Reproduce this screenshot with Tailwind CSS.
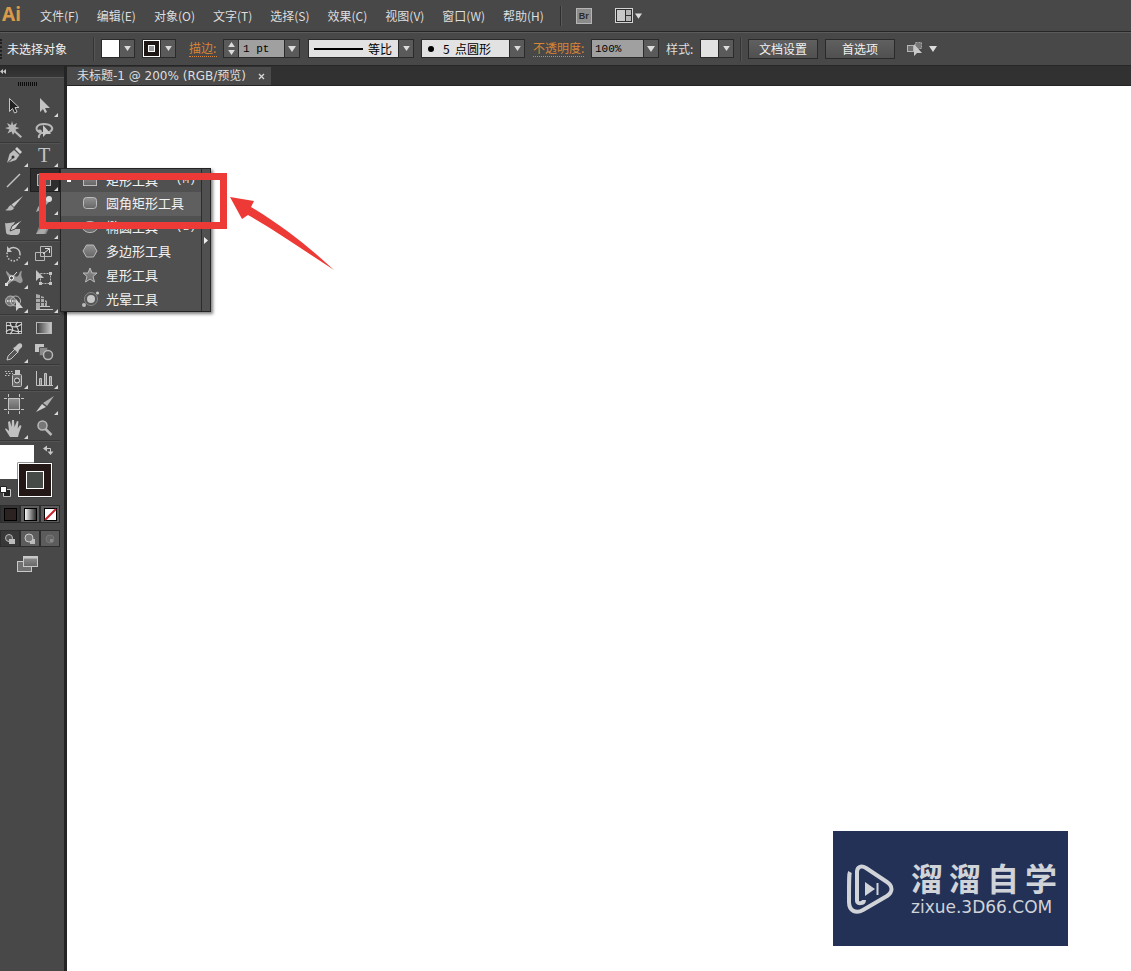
<!DOCTYPE html>
<html lang="zh-CN">
<head>
  <meta charset="UTF-8" />
  <meta name="viewport" content="width=device-width, initial-scale=1" />
  <title>未标题-1 @ 200% (RGB/预览)</title>
  <script src="https://cdn.jsdelivr.net/npm/@tailwindcss/browser@4"></script>
</head>
<body class="flex min-h-screen flex-col bg-white font-['Noto_Sans_CJK_SC',sans-serif] text-[12px] leading-4 text-[#dedede]">

  <!-- shared symbols -->
  <svg class="absolute h-0 w-0">
    <defs>
      <symbol id="down" viewBox="0 0 8 6"><path d="M0 0h8L4 6z" fill="#dcdcdc" /></symbol>
      <symbol id="more" viewBox="0 0 30 24"><path d="M28 19v4h-4z" fill="#d8d8d8" /></symbol>
      <linearGradient id="metal" x1="0" y1="0" x2="0" y2="1"><stop offset="0" stop-color="#929292" /><stop offset="1" stop-color="#666" /></linearGradient>
      <linearGradient id="fade" x1="0" y1="0" x2="1" y2="0"><stop offset="0" stop-color="#3a3a3a" /><stop offset="1" stop-color="#ccc" /></linearGradient>
      <linearGradient id="fadeBack" x1="0" y1="0" x2="1" y2="0"><stop offset="0" stop-color="#fff" /><stop offset="1" stop-color="#222" /></linearGradient>
    </defs>
  </svg>

  <!-- menu bar -->
  <header class="flex h-[31px] items-center bg-[#484848]">
    <span class="w-10 pb-1 pl-[2px] font-['Noto_Sans',sans-serif] text-[19px] leading-6 font-bold text-[#d99a4a]">Ai</span>
    <nav class="flex gap-[18px]">
      <a href="#">文件(F)</a>
      <a href="#">编辑(E)</a>
      <a href="#">对象(O)</a>
      <a href="#">文字(T)</a>
      <a href="#">选择(S)</a>
      <a href="#">效果(C)</a>
      <a href="#">视图(V)</a>
      <a href="#">窗口(W)</a>
      <a href="#">帮助(H)</a>
    </nav>
    <div class="ml-4 h-5 w-[2px] border-l border-[#2e2e2e] bg-[#5a5a5a]"></div>
    <button class="ml-[14px] h-4 w-4 border border-[#b5b5b5] bg-[#8b8b8b] font-['Liberation_Sans',sans-serif] text-[9px] leading-3 font-bold text-[#2b2b2b]">Br</button>
    <button class="ml-[23px] flex items-center gap-[2px]" aria-label="排列文档">
      <svg class="h-[15px] w-[18px]" viewBox="0 0 18 15"><rect x=".5" y=".5" width="17" height="14" fill="#2e2e2e" stroke="#d4d4d4" /><path d="M2 2h8v11H2z" fill="#c8c8c8" /><path d="M11 2h5v5h-5zM11 8h5v5h-5z" fill="#b5b5b5" /></svg>
      <svg class="h-[6px] w-[7px]"><use href="#down" /></svg>
    </button>
  </header>

  <!-- control bar -->
  <div class="flex h-[35px] items-center border-t border-b border-[#262626] bg-[#484848] shadow-[inset_0_1px_0_#5b5b5b]">
    <div class="h-5 w-[2px] border-l-2 border-dotted border-[#1f1f1f]"></div>
    <span class="ml-[5px] w-[86px] text-[#f0f0f0]">未选择对象</span>
    <div class="h-6 w-[2px] border-l border-[#353535] bg-[#555]"></div>

    <button class="ml-[6px] flex h-[19px] w-[34px] items-center border border-[#2a2a2a] bg-[#5a5a5a]" aria-label="填色">
      <span class="h-full w-[18px] border-r border-[#2a2a2a] bg-white"></span>
      <svg class="ml-1 h-[5px] w-[7px]"><use href="#down" /></svg>
    </button>
    <button class="ml-[7px] flex h-[19px] w-[34px] items-center border border-[#2a2a2a] bg-[#5a5a5a]" aria-label="描边颜色">
      <svg class="h-[17px] w-[18px]" viewBox="0 0 18 17"><rect x=".5" y=".5" width="16" height="16" fill="#1e1715" stroke="#fff" /><rect x="5.500" y="5.500" width="6" height="6" fill="#999" stroke="#fff" /><path d="M17.500 0v17" stroke="#2a2a2a" /></svg>
      <svg class="ml-1 h-[5px] w-[7px]"><use href="#down" /></svg>
    </button>

    <label for="stroke" class="ml-[13px] w-7 border-b border-dotted border-[#d98436] whitespace-nowrap text-[#d98436]">描边:</label>
    <div class="ml-[6px] flex h-[19px] w-[77px] border border-[#2a2a2a] bg-[#5a5a5a]">
      <div class="flex w-[15px] flex-col items-center justify-evenly border-r border-[#2a2a2a]">
        <svg class="h-[5px] w-[7px] rotate-180"><use href="#down" /></svg>
        <svg class="h-[5px] w-[7px]"><use href="#down" /></svg>
      </div>
      <input id="stroke" value="1 pt" class="w-[45px] bg-[#a0a0a0] pl-1 font-['Liberation_Mono',monospace] text-[11px] text-black" />
      <button class="flex flex-1 items-center justify-center border-l border-[#2a2a2a]" aria-label="粗细"><svg class="h-[6px] w-2"><use href="#down" /></svg></button>
    </div>

    <div class="ml-2 flex h-[19px] w-[106px] border border-[#2a2a2a] bg-[#5a5a5a]">
      <div class="flex flex-1 items-center bg-[#e2e2e2]">
        <div class="mx-[5px] h-[2px] w-[49px] bg-black"></div>
        <select class="w-7 appearance-none text-[12px] leading-4 text-black" aria-label="变量宽度"><option>等比</option></select>
      </div>
      <button class="flex w-[15px] items-center justify-center border-l border-[#2a2a2a]" aria-label="展开宽度"><svg class="h-[5px] w-[7px]"><use href="#down" /></svg></button>
    </div>

    <div class="ml-[7px] flex h-[19px] w-[104px] border border-[#2a2a2a] bg-[#5a5a5a]">
      <div class="flex flex-1 items-center bg-[#e2e2e2]">
        <div class="mr-[9px] ml-[6px] h-[6px] w-[6px] rounded-full bg-black"></div>
        <select class="w-16 appearance-none text-[12px] leading-4 text-black" aria-label="画笔定义"><option>5 &nbsp;点圆形</option></select>
      </div>
      <button class="flex w-[15px] items-center justify-center border-l border-[#2a2a2a]" aria-label="展开画笔"><svg class="h-[5px] w-[7px]"><use href="#down" /></svg></button>
    </div>

    <label for="opacity" class="ml-2 w-[51px] border-b border-dotted border-[#d98436] whitespace-nowrap text-[#d98436]">不透明度:</label>
    <div class="ml-[7px] flex h-[19px] w-[68px] border border-[#2a2a2a] bg-[#5a5a5a]">
      <input id="opacity" value="100%" class="w-[51px] bg-[#a0a0a0] pl-[3px] font-['Liberation_Mono',monospace] text-[11px] text-black" />
      <button class="flex flex-1 items-center justify-center border-l border-[#2a2a2a]" aria-label="展开不透明度"><svg class="h-[6px] w-2"><use href="#down" /></svg></button>
    </div>

    <span class="ml-[7px] w-[34px]">样式:</span>
    <button class="flex h-[19px] w-[34px] items-center border border-[#2a2a2a] bg-[#5a5a5a]" aria-label="图形样式">
      <span class="h-full w-[18px] border-r border-[#2a2a2a] bg-[#e2e2e2]"></span>
      <svg class="ml-1 h-[5px] w-[7px]"><use href="#down" /></svg>
    </button>
    <div class="ml-[6px] h-6 w-[2px] border-l border-[#353535] bg-[#555]"></div>
    <button class="ml-[6px] h-5 w-[70px] border border-[#2a2a2a] bg-linear-to-b from-[#606060] to-[#505050] text-[#f0f0f0]">文档设置</button>
    <button class="ml-[7px] h-5 w-[70px] border border-[#2a2a2a] bg-linear-to-b from-[#606060] to-[#505050] text-[#f0f0f0]">首选项</button>
    <button class="ml-[11px] flex items-center gap-[6px]" aria-label="选择类似对象">
      <svg class="h-[15px] w-[17px]" viewBox="0 0 17 15"><rect x="1.500" y="4.500" width="6" height="6" fill="#6e6e6e" stroke="#b5b5b5" /><rect x="9.500" y="1.500" width="6" height="6" fill="#777" stroke="#a5a5a5" stroke-dasharray="2 1" /><path d="M8 3v12l3-3h5z" fill="#c9c9c9" /></svg>
      <svg class="h-[6px] w-2"><use href="#down" /></svg>
    </button>
  </div>

  <div class="flex flex-1">
    <!-- tool panel -->
    <aside class="relative w-[67px] shrink-0 border-r-[3px] border-[#242424] bg-[#484848]">
      <div class="flex h-[11px] items-center bg-linear-to-b from-[#2c2c2c] to-[#363636]">
        <svg class="h-[5px] w-[6px]" viewBox="0 0 6 5"><path d="M3 0v5L0 2.500zM6 0v5L3 2.500z" fill="#c8c8c8" /></svg>
      </div>
      <div class="flex h-[17px] items-start border-t border-[#5a5a5a] pt-1 pl-[18px]">
        <svg class="h-1 w-5" viewBox="0 0 20 4"><path d="M0 2h20" stroke="#0c0c0c" stroke-width="4" stroke-dasharray="1 1" /></svg>
      </div>

      <div class="grid w-[60px] grid-cols-2">
        <button aria-label="选择工具"><svg class="h-6 w-[30px]" viewBox="0 0 30 24"><path d="M9.500 4.500v13l3-3 2 4.500 2.500-1-2-4.500h4z" fill="#222" stroke="#c4c4c4" /></svg></button>
        <button aria-label="直接选择工具"><svg class="h-6 w-[30px]" viewBox="0 0 30 24"><path d="M10 4v14l3-3 2 4 2-1-2-4h5z" fill="#c4c4c4" /><use href="#more" /></svg></button>
        <button aria-label="魔棒工具"><svg class="h-6 w-[30px]" viewBox="0 0 30 24"><path d="M12 3l1.200 4L17 5l-1.500 4 4 1-4 1.500.5 1.500 6 5.500-1.500 1.500-6-5.500-1.500 2.500-1.500-3.500-4 2 2-4-4.500-1.500L9 9 7 5l4 2z" fill="#b8b8b8" /></svg></button>
        <button aria-label="套索工具"><svg class="h-6 w-[30px]" viewBox="0 0 30 24"><path d="M9 14c-5-3-2-8 5-8s10 4 7 7c-2 2-8 3-12 1M9 14c-2-1 2-3 2 0s-3 2-2 6" fill="none" stroke="#b8b8b8" stroke-width="2" /><path d="M13 7v12l3-3h5z" fill="#c8c8c8" /></svg></button>
      </div>
      <hr class="my-0 mr-1 border-t border-[#383838] shadow-[0_1px_0_#545454]" />
      <div class="mt-[1px] grid w-[60px] grid-cols-2">
        <button aria-label="钢笔工具"><svg class="h-6 w-[30px]" viewBox="0 0 30 24"><path d="M17 3l5 5-2 2-5-5z" fill="#d0d0d0" /><path d="M14 6l5.500 5-3.500 5-9 3 2.500-9z" fill="#bdbdbd" /><path d="M7.500 19l5-5" stroke="#333" /><circle cx="13" cy="13" r="1.500" fill="#333" /><use href="#more" /></svg></button>
        <button aria-label="文字工具"><svg class="h-6 w-[30px]" viewBox="0 0 30 24"><text x="14" y="18" text-anchor="middle" fill="#c4c4c4" class="font-['Liberation_Serif',serif] text-[20px]">T</text><use href="#more" /></svg></button>
        <button aria-label="直线段工具"><svg class="h-6 w-[30px]" viewBox="0 0 30 24"><path d="M7 19L20 6" stroke="#c4c4c4" stroke-width="1.500" /><use href="#more" /></svg></button>
        <button class="border border-[#1f1f1f] bg-[#2e2e2e]" aria-label="矩形工具"><svg class="-m-px h-6 w-[30px]" viewBox="0 0 30 24"><rect x="7.500" y="6.500" width="13" height="11" fill="#555" stroke="#b5b5b5" /><use href="#more" /></svg></button>
        <button aria-label="画笔工具"><svg class="h-6 w-[30px]" viewBox="0 0 30 24"><path d="M23 4L14 15l-2.500-2.500z" fill="#c8c8c8" /><path d="M11 13l3 3c-1 3-6 3-9 2 3 0 3-4 6-5z" fill="#b8b8b8" /></svg></button>
        <button aria-label="铅笔工具"><svg class="h-6 w-[30px]" viewBox="0 0 30 24"><path d="M18 5l3 3-10 10-5 2 2-5z" fill="#aaa" /><circle cx="19" cy="7" r="3" fill="#ddd" /><use href="#more" /></svg></button>
        <button aria-label="斑点画笔工具"><svg class="h-6 w-[30px]" viewBox="0 0 30 24"><path d="M5 7c3 1 7-1 10-1l-4 7h9v3c-1 4-4 3-7 3s-7 0-7-3z" fill="#b8b8b8" /><path d="M23 3l-8 10-5 2 2-5z" fill="#d0d0d0" stroke="#444" /></svg></button>
        <button aria-label="橡皮擦工具"><svg class="h-6 w-[30px]" viewBox="0 0 30 24"><path d="M11 6h11l-6 12H6z" fill="#8d8d8d" /><path d="M6 18l5-6h6l-3 6z" fill="#aaa" /><use href="#more" /></svg></button>
      </div>
      <hr class="my-0 mr-1 border-t border-[#383838] shadow-[0_1px_0_#545454]" />
      <div class="mt-[1px] grid w-[60px] grid-cols-2">
        <button aria-label="旋转工具"><svg class="h-6 w-[30px]" viewBox="0 0 30 24"><path d="M9 7.500a6.500 6.500 0 0 1 11 4.500" fill="none" stroke="#c4c4c4" stroke-width="1.500" /><path d="M20 12a6.500 6.500 0 1 1-12-3" fill="none" stroke="#c4c4c4" stroke-width="1.500" stroke-dasharray="1.500 1.500" /><path d="M7 4v6h5z" fill="#c4c4c4" /><use href="#more" /></svg></button>
        <button aria-label="比例缩放工具"><svg class="h-6 w-[30px]" viewBox="0 0 30 24"><path d="M10.500 4.500h11v10h-11zM5.500 10.500h9v8h-9z" fill="none" stroke="#b8b8b8" /><path d="M13 12l6-5M15 6.500h4.500V11" fill="none" stroke="#e0e0e0" /><use href="#more" /></svg></button>
        <button aria-label="宽度工具"><svg class="h-6 w-[30px]" viewBox="0 0 30 24"><path d="M6 5c2 0 3 4 6 4s4 3 6 1 1-5 4-5c-1 3-1 5 0 7s1 4-1 5-5-3-8-2-4 4-7 4 3-3 3-6-3-4-3-8z" fill="#999" /><path d="M6 18L17 6" stroke="#e0e0e0" /><circle cx="11.500" cy="12" r="2" fill="#444" stroke="#fff" /><path d="M5 17h3v3H5z" fill="#ddd" /><use href="#more" /></svg></button>
        <button aria-label="自由变换工具"><svg class="h-6 w-[30px]" viewBox="0 0 30 24"><rect x="10.500" y="7.500" width="10" height="10" fill="none" stroke="#b8b8b8" stroke-dasharray="2 1" /><path d="M19 6h3v3h-3zM19 16h3v3h-3zM9 16h3v3H9zM6 4v11l3-3h5z" fill="#c4c4c4" /></svg></button>
        <button aria-label="形状生成器工具"><svg class="h-6 w-[30px]" viewBox="0 0 30 24"><circle cx="10.500" cy="11" r="5" fill="#777" stroke="#b8b8b8" /><circle cx="15.500" cy="11" r="5" fill="none" stroke="#b8b8b8" /><path d="M7 11h8" stroke="#eee" stroke-width="1.500" stroke-dasharray="1.500 1" /><path d="M16 9v12l3-3h4z" fill="#d0d0d0" /><use href="#more" /></svg></button>
        <button aria-label="透视网格工具"><svg class="h-6 w-[30px]" viewBox="0 0 30 24"><path d="M6 4l4 1v14H6zM11 6l3 1v10h-3zM15 10l2 1v6h-2z" fill="#aaa" /><path d="M6 19.500h17M10 16.500h10" stroke="#c4c4c4" /><path d="M6 8.500h8M6 12.500h10" stroke="#555" /><use href="#more" /></svg></button>
      </div>
      <hr class="my-0 mr-1 border-t border-[#383838] shadow-[0_1px_0_#545454]" />
      <div class="mt-[1px] grid w-[60px] grid-cols-2">
        <button aria-label="网格工具"><svg class="h-6 w-[30px]" viewBox="0 0 30 24"><rect x="6.500" y="6.500" width="15" height="11" fill="#333" stroke="#b8b8b8" /><path d="M6 10c5-3 6 5 16-2M6 16c5-6 8 2 16-1M10 6c0 5 6 6 0 12M18 6c-6 4 3 6 0 12" fill="none" stroke="#d4d4d4" stroke-width="1.200" /></svg></button>
        <button aria-label="渐变工具"><svg class="h-6 w-[30px]" viewBox="0 0 30 24"><rect x="6.500" y="6.500" width="15" height="11" fill="url(#fade)" stroke="#b8b8b8" /></svg></button>
        <button aria-label="吸管工具"><svg class="h-6 w-[30px]" viewBox="0 0 30 24"><path d="M15 9l3 3-7 7-4 1 1-4z" fill="#555" stroke="#c4c4c4" /><path d="M13 8l2-1 3-3c3-2 5 1 4 3l-3 3-1 3z" fill="#c4c4c4" /><use href="#more" /></svg></button>
        <button aria-label="混合工具"><svg class="h-6 w-[30px]" viewBox="0 0 30 24"><path d="M5 4h9v8H5z" fill="#c4c4c4" /><path d="M9.500 7.500h8v8h-8z" fill="#8a8a8a" stroke="#555" /><circle cx="18" cy="15" r="4.500" fill="#555" stroke="#b8b8b8" stroke-width="1.500" /></svg></button>
      </div>
      <hr class="my-0 mr-1 border-t border-[#383838] shadow-[0_1px_0_#545454]" />
      <div class="mt-[1px] grid w-[60px] grid-cols-2">
        <button aria-label="符号喷枪工具"><svg class="h-6 w-[30px]" viewBox="0 0 30 24"><rect x="12.500" y="8.500" width="9" height="12" rx="1" fill="#666" stroke="#c4c4c4" /><path d="M15 4h5v4h-5z" fill="#c4c4c4" /><circle cx="17" cy="14.500" r="2.500" fill="#444" stroke="#e0e0e0" /><path d="M5 5.500h8M6 7.500h7M5 9.500h5" stroke="#c4c4c4" stroke-dasharray="1.500 1.500" /><use href="#more" /></svg></button>
        <button aria-label="柱形图工具"><svg class="h-6 w-[30px]" viewBox="0 0 30 24"><path d="M6.500 5v14.500H23" fill="none" stroke="#c4c4c4" /><path d="M9.500 12.500h2v7h-2zM14.500 7.500h2v12h-2zM19.500 10.500h2v9h-2z" fill="#888" stroke="#c4c4c4" /><use href="#more" /></svg></button>
      </div>
      <hr class="my-0 mr-1 border-t border-[#383838] shadow-[0_1px_0_#545454]" />
      <div class="mt-[1px] grid w-[60px] grid-cols-2">
        <button aria-label="画板工具"><svg class="h-6 w-[30px]" viewBox="0 0 30 24"><rect x="8.500" y="6.500" width="11" height="11" fill="url(#metal)" stroke="#c4c4c4" /><path d="M4 6.500h3M4 17.500h3M21 6.500h3M21 17.500h3M8.500 2v3M19.500 2v3M8.500 19v3M19.500 19v3" stroke="#c4c4c4" /></svg></button>
        <button aria-label="切片工具"><svg class="h-6 w-[30px]" viewBox="0 0 30 24"><path d="M24 4l-7 10-4-3z" fill="#b0b0b0" /><path d="M12 12l4 3-10 5z" fill="#d0d0d0" /><use href="#more" /></svg></button>
        <button aria-label="抓手工具"><svg class="h-6 w-[30px]" viewBox="0 0 30 24"><path d="M10 21l-5-8c1-1 2 0 4 2L8 6l2-1 1.500 6L12 4h2l.5 7L17 5l1.500.5-.8 7L20 9l1.500 1-2.500 7-1 4z" fill="#c0c0c0" /><use href="#more" /></svg></button>
        <button aria-label="缩放工具"><svg class="h-6 w-[30px]" viewBox="0 0 30 24"><circle cx="12.500" cy="9.500" r="4.500" fill="#777" stroke="#b8b8b8" stroke-width="1.500" /><path d="M15.500 13l6 6" stroke="#b8b8b8" stroke-width="2.500" /></svg></button>
      </div>
      <hr class="my-0 mr-1 border-t border-[#383838] shadow-[0_1px_0_#545454]" />

      <!-- fill and stroke -->
      <svg class="mt-[1px] block h-[60px] w-[60px]" viewBox="0 0 60 60">
        <path d="M0 3h34v34H0z" fill="#fff" />
        <rect x="17.500" y="20.500" width="35" height="35" fill="#333" />
        <rect x="18.500" y="21.500" width="33" height="33" fill="#231815" stroke="#fff" />
        <rect x="26.500" y="29.500" width="17" height="17" fill="#464b48" stroke="#fff" />
        <path d="M46 6.500h4.500V10" fill="none" stroke="#c8c8c8" /><path d="M43 6.500l4-3v6zM47.500 9.500h6L50.500 13z" fill="#c8c8c8" />
        <path d="M3.500 47.500h7v7h-7z" fill="#222" stroke="#c8c8c8" /><path d="M.5 44.500h6v6h-6z" fill="#fff" stroke="#222" />
      </svg>

      <div class="mt-[3px] flex">
        <button class="flex h-[18px] w-5 items-center justify-center border border-[#2c2c2c] bg-[#333]" aria-label="颜色"><span class="h-[13px] w-[13px] border border-black bg-[#2b2222]"></span></button>
        <button class="flex h-[18px] w-5 items-center justify-center border border-[#2c2c2c] bg-[#5c5c5c]" aria-label="渐变"><svg class="h-[13px] w-[13px]" viewBox="0 0 13 13"><rect x=".5" y=".5" width="12" height="12" fill="url(#fadeBack)" stroke="#000" /></svg></button>
        <button class="flex h-[18px] w-5 items-center justify-center border border-[#2c2c2c] bg-[#5c5c5c]" aria-label="无"><svg class="h-[13px] w-[13px]" viewBox="0 0 13 13"><rect x=".5" y=".5" width="12" height="12" fill="#fff" stroke="#000" /><path d="M1 12L12 1" stroke="#c8202a" stroke-width="2" /></svg></button>
      </div>
      <div class="mt-[7px] flex">
        <button class="flex h-[17px] w-5 items-center justify-center border border-[#2c2c2c] bg-[#383838]" aria-label="正常绘图"><svg class="h-3 w-3" viewBox="0 0 12 12"><circle cx="5" cy="5" r="3.500" fill="#555" stroke="#bbb" /><path d="M5 6h6v5H5z" fill="#bbb" /></svg></button>
        <button class="flex h-[17px] w-5 items-center justify-center border border-[#2c2c2c] bg-[#5c5c5c]" aria-label="背面绘图"><svg class="h-3 w-3" viewBox="0 0 12 12"><path d="M6 6h5v5H6z" fill="#bbb" /><circle cx="5" cy="5" r="4" fill="#777" stroke="#ccc" /></svg></button>
        <button class="flex h-[17px] w-5 items-center justify-center border border-[#2c2c2c] bg-[#5c5c5c]" aria-label="内部绘图"><svg class="h-3 w-3" viewBox="0 0 12 12"><circle cx="6" cy="6" r="4" fill="#666" stroke="#777" /><path d="M6 6h3v3H6z" fill="#888" /></svg></button>
      </div>
      <button class="mt-[9px] ml-[17px] block" aria-label="更改屏幕模式">
        <svg class="h-[17px] w-[22px]" viewBox="0 0 22 17"><rect x=".5" y="5.500" width="14" height="10" fill="#707070" stroke="#c8c8c8" /><rect x="6.500" y=".5" width="14" height="10" fill="url(#metal)" stroke="#c8c8c8" /><path d="M6 1.500h15" stroke="#c8c8c8" stroke-width="2" /></svg>
      </button>

      <!-- shape tool flyout -->
      <div class="absolute top-[102px] left-[60px] flex w-[151px] border border-[#242424] bg-[#505050] text-[13px] text-[#f2f2f2] shadow-[2px_2px_3px_#00000080]">
        <ul class="flex-1">
          <li><button class="flex h-[23px] w-full items-center pb-[2px] pl-[6px]"><span class="mr-[11px] h-1 w-1 bg-white"></span><svg class="mr-2 h-4 w-4" viewBox="0 0 16 16"><rect x="1.500" y="2.500" width="13" height="11" fill="url(#metal)" stroke="#bbb" /></svg>矩形工具<span class="ml-[18px] font-['Liberation_Mono',monospace] text-[11px]">(M)</span></button></li>
          <li><button class="flex h-6 w-full items-center bg-[#5f5f5f] pb-[2px] pl-[21px]"><svg class="mr-2 h-4 w-4" viewBox="0 0 16 16"><rect x="1.500" y="2.500" width="13" height="11" rx="3" fill="url(#metal)" stroke="#bbb" /></svg>圆角矩形工具</button></li>
          <li><button class="flex h-6 w-full items-center pb-[2px] pl-[21px]"><svg class="mr-2 h-4 w-4" viewBox="0 0 16 16"><ellipse cx="8" cy="8" rx="7.500" ry="5.500" fill="url(#metal)" stroke="#bbb" /></svg>椭圆工具<span class="ml-[18px] font-['Liberation_Mono',monospace] text-[11px]">(L)</span></button></li>
          <li><button class="flex h-6 w-full items-center pb-[2px] pl-[21px]"><svg class="mr-2 h-4 w-4" viewBox="0 0 16 16"><path d="M4.500 2h7L15 8l-3.500 6h-7L1 8z" fill="url(#metal)" stroke="#bbb" /></svg>多边形工具</button></li>
          <li><button class="flex h-6 w-full items-center pb-[2px] pl-[21px]"><svg class="mr-2 h-4 w-4" viewBox="0 0 16 16"><path d="M8 1l2 5h5l-4 3.500L12.500 15 8 12l-4.500 3L5 9.500 1 6h5z" fill="url(#metal)" stroke="#bbb" /></svg>星形工具</button></li>
          <li><button class="flex h-[23px] w-full items-center pb-[2px] pl-[21px]"><svg class="mr-2 h-4 w-4 overflow-visible" viewBox="0 0 16 16"><circle cx="9" cy="8" r="6.500" fill="#555" stroke="#888" /><circle cx="9" cy="8" r="4" fill="#c8c8c8" /><circle cx="2" cy="14" r="2" fill="#bbb" /><circle cx="15.500" cy="2" r="1.500" fill="#ccc" /></svg>光晕工具</button></li>
        </ul>
        <button class="flex w-[9px] items-center justify-center border-l border-[#2c2c2c]" aria-label="拖出"><svg class="h-[7px] w-1" viewBox="0 0 4 7"><path d="M0 0v7l4-3.500z" fill="#eee" /></svg></button>
      </div>

      <!-- highlight frame and pointer -->
      <div class="absolute top-[107px] left-[39px] h-14 w-[188px] border-[7px] border-[#ee3a36]"></div>
      <svg class="absolute top-[130px] left-[230px] h-[76px] w-[106px]" viewBox="0 0 106 76"><path d="M0 1l24 4-3 6c32 19 58 40 83 63C76 56 48 36 18 19l-6 4z" fill="#ee3a36" /></svg>
    </aside>

    <!-- document -->
    <main class="flex flex-1 flex-col">
      <div class="h-5 border-b border-[#242424] bg-[#313131] pt-[1px]">
        <div class="flex h-[18px] w-[204px] items-center justify-between bg-[#4a4a4a] pr-[6px] pl-[10px]">
          <span class="font-['DejaVu_Sans','Noto_Sans_CJK_SC',sans-serif] whitespace-pre">未标题-1 @ 200% (RGB/预览)</span>
          <button class="h-[7px] w-[7px]" aria-label="关闭"><svg class="h-[7px] w-[7px]" viewBox="0 0 7 7"><path d="M1 1l5 5M6 1L1 6" stroke="#d8d8d8" stroke-width="1.300" /></svg></button>
        </div>
      </div>

      <!-- site badge -->
      <div class="mt-auto mr-[63px] mb-[25px] ml-auto flex h-[115px] w-[235px] items-center bg-[#233156] pl-[14px] text-[#d0d3d8]">
        <svg class="h-[50px] w-[47px] shrink-0" viewBox="0 0 47 50" fill="none" stroke="#d0d3d8" stroke-width="4">
          <path d="M3 8c-1 2-1 4-1 30 0 9 7 12 14 8l24-14c6-4 6-10 0-14L19 4c-5-3-9-1-9 4v29c0 3 7 3 7-1" stroke-linejoin="round" />
          <path d="M18 18l10 7-10 7z" fill="#d0d3d8" stroke="none" /><path d="M30.500 19v12" stroke-width="2" />
        </svg>
        <div class="ml-[17px] w-[146px]">
          <div class="flex justify-between text-[32px] leading-8 font-bold"><span>溜</span><span>溜</span><span>自</span><span>学</span></div>
          <div class="mt-1 font-['DejaVu_Sans',sans-serif] text-[17px] leading-5">zixue.3D66.COM</div>
        </div>
      </div>
    </main>
  </div>

</body>
</html>
